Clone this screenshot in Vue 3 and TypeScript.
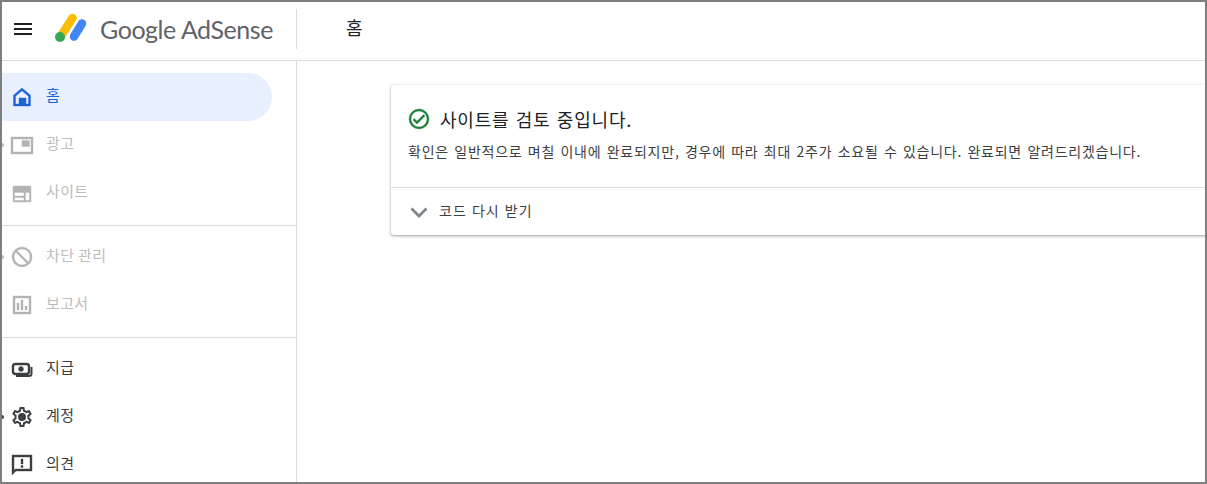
<script setup lang="ts">
interface Item { label: string; icon: string; dim?: boolean; active?: boolean; dot?: boolean }
const groups: Item[][] = [
  [
    { label: '홈', icon: 'home', active: true },
    { label: '광고', icon: 'ads', dim: true, dot: true },
    { label: '사이트', icon: 'sites', dim: true },
  ],
  [
    { label: '차단 관리', icon: 'block', dim: true, dot: true },
    { label: '보고서', icon: 'report', dim: true },
  ],
  [
    { label: '지급', icon: 'pay' },
    { label: '계정', icon: 'gear', dot: true },
    { label: '의견', icon: 'feedback' },
  ],
]
</script>

<template>
  <div class="frame">
    <header class="top">
      <div class="brand">
        <button class="menu" aria-label="메뉴">
          <svg width="24" height="24" viewBox="0 0 24 24"><path d="M3 18h18v-2H3v2zm0-5h18v-2H3v2zm0-7v2h18V6H3z" fill="#202124"/></svg>
        </button>
        <svg class="logo" width="34" height="30" viewBox="0 0 34 30">
          <path d="M7 23 L18.500 5" stroke="#fbbc04" stroke-width="8.600" stroke-linecap="round" fill="none"/>
          <path d="M20 23.500 L28 10.500" stroke="#4285f4" stroke-width="8.600" stroke-linecap="round" fill="none"/>
          <circle cx="6" cy="24" r="5" fill="#34a853"/>
        </svg>
        <span class="wordmark">Google AdSense</span>
      </div>
      <h1 class="title">홈</h1>
    </header>
    <div class="body">
      <nav class="side">
        <div v-for="(g, gi) in groups" :key="gi" class="group">
          <a v-for="it in g" :key="it.label" class="item" :class="{ dim: it.dim, active: it.active }">
            <i v-if="it.dot" class="dot"></i>
            <svg class="ico" width="24" height="24" viewBox="0 0 24 24" fill="currentColor" stroke="currentColor" stroke-width=".4">
              <path v-if="it.icon === 'home'" fill-rule="evenodd" d="M12 3 3.500 10.200V21h17V10.200L12 3zm0 2.700 6.500 5.500V19H16v-6H9v6H5.500v-7.800L12 5.700z"/>
              <path v-else-if="it.icon === 'ads'" fill-rule="evenodd" d="M1 4h22v17H1V4zm2 2v13h18V6H3zm9 1.500h7.500v6H12v-6z"/>
              <path v-else-if="it.icon === 'sites'" fill-rule="evenodd" d="M4 5h16a1 1 0 0 1 1 1v14a1 1 0 0 1-1 1H4a1 1 0 0 1-1-1V6a1 1 0 0 1 1-1zM4.500 11.500V15H14v-3.500H4.500zm0 5v3H14v-3H4.500zm11-5v8h4v-8h-4z"/>
              <path v-else-if="it.icon === 'block'" fill-rule="evenodd" d="M12 2a10 10 0 1 0 0 20 10 10 0 0 0 0-20zM20 12a8 8 0 0 0-12.900-6.300L18.300 16.900A7.900 7.900 0 0 0 20 12zM16.900 18.300 5.700 7.100A8 8 0 0 0 16.900 18.300z"/>
              <path v-else-if="it.icon === 'report'" fill-rule="evenodd" d="M3 3h18v18H3V3zm2 2v14h14V5H5zm2 5h2v7H7v-7zm4-3h2v10h-2V7zm4 6h2v4h-2v-4z"/>
              <g v-else-if="it.icon === 'pay'">
                <rect x="3" y="7" width="16" height="10" rx="2.500" fill="none" stroke="currentColor" stroke-width="2.400"/>
                <circle cx="11" cy="12" r="2.500"/>
                <path d="M21.500 10v6.500a2.500 2.500 0 0 1-2.500 2.500H6" fill="none" stroke="currentColor" stroke-width="2"/>
              </g>
              <path v-else-if="it.icon === 'gear'" stroke="none" fill-rule="evenodd" d="M19.430 12.980c.04-.32.070-.64.070-.98s-.030-.66-.070-.98l2.110-1.650a.5.5 0 0 0 .12-.64l-2-3.460a.5.5 0 0 0-.61-.22l-2.490 1a7.300 7.300 0 0 0-1.690-.98l-.38-2.650A.49.49 0 0 0 14 2h-4a.49.49 0 0 0-.49.420l-.38 2.650c-.61.250-1.170.590-1.690.980l-2.490-1a.57.57 0 0 0-.18-.030.5.5 0 0 0-.43.250l-2 3.460a.49.490 0 0 0 .12.640l2.110 1.650c-.04.320-.07.650-.07.980s.030.660.070.980l-2.110 1.650a.5.5 0 0 0-.12.640l2 3.460a.5.5 0 0 0 .61.220l2.490-1c.52.400 1.080.730 1.690.980l.38 2.650c.03.240.24.420.49.420h4c.25 0 .46-.180.49-.420l.38-2.650c.61-.250 1.170-.590 1.690-.980l2.490 1a.5.5 0 0 0 .61-.220l2-3.460a.5.5 0 0 0-.12-.640l-2.110-1.650zm-1.980-1.710c.04.310.05.520.05.730s-.020.430-.05.730l-.14 1.130.89.700 1.080.840-.7 1.210-1.270-.51-1.040-.42-.9.680c-.43.320-.84.560-1.250.730l-1.060.430-.16 1.130-.2 1.350h-1.400l-.19-1.350-.16-1.130-1.060-.43a5.700 5.700 0 0 1-1.230-.71l-.91-.7-1.060.43-1.270.51-.7-1.210 1.080-.84.890-.7-.14-1.130A8 8 0 0 1 6.500 12c0-.2.020-.43.050-.73l.14-1.130-.89-.7-1.080-.84.7-1.210 1.270.51 1.040.42.900-.68c.43-.32.840-.56 1.250-.73l1.060-.43.160-1.130.2-1.350h1.390l.19 1.350.16 1.130 1.060.43c.43.180.83.410 1.230.71l.91.700 1.060-.43 1.270-.51.7 1.210-1.070.85-.89.700.14 1.130zM12 8a4 4 0 1 0 0 8 4 4 0 0 0 0-8z"/>
              <path v-else fill-rule="evenodd" d="M2 2h20v16H6l-4 4V2zm2 2v13.200L5.200 16H20V4H4zm7 2h2v5h-2V6zm0 6.500h2v2h-2v-2z"/>
            </svg>
            <span class="label">{{ it.label }}</span>
          </a>
        </div>
      </nav>
      <main class="main">
        <section class="card">
          <div class="card-top">
            <div class="head">
              <svg width="24" height="24" viewBox="0 0 24 24" fill="#188038" stroke="#188038" stroke-width=".4"><path d="M12 2a10 10 0 1 0 0 20 10 10 0 0 0 0-20zm0 18a8 8 0 1 1 0-16 8 8 0 0 1 0 16zm4.590-12.420L10 14.170l-2.590-2.580L6 13l4 4 8-8-1.410-1.420z"/></svg>
              <h2>사이트를 검토 중입니다.</h2>
            </div>
            <p>확인은 일반적으로 며칠 이내에 완료되지만, 경우에 따라 최대 2주가 소요될 수 있습니다. 완료되면 알려드리겠습니다.</p>
          </div>
          <div class="card-foot">
            <svg width="24" height="24" viewBox="0 0 24 24"><path d="M4.500 8.500 12 16 19.500 8.500" fill="none" stroke="#80868b" stroke-width="2.800"/></svg>
            <span class="foot-label">코드 다시 받기</span>
          </div>
        </section>
      </main>
    </div>
  </div>
</template>

<style>
html, body { margin: 0; background: #fff; overflow: hidden; }
</style>

<style scoped>
.frame {
  box-sizing: border-box;
  width: 1207px;
  height: 484px;
  border: 2px solid #7f7f7f;
  background: #fff;
  display: flex;
  flex-direction: column;
  overflow: hidden;
  font-family: "Noto Sans CJK KR", "Noto Sans", sans-serif;
  color: #3c4043;
}
.top {
  flex: none;
  height: 59px;
  box-sizing: border-box;
  border-bottom: 1px solid #dadce0;
  display: flex;
  align-items: center;
}
.brand {
  box-sizing: border-box;
  width: 295px;
  height: 40px;
  margin-top: -4px;
  border-right: 1px solid #dadce0;
  display: flex;
  align-items: center;
}
.menu {
  border: 0;
  background: none;
  padding: 0;
  margin-left: 9px;
  width: 24px;
  height: 24px;
}
.logo { margin-left: 19px; margin-top: -2px; }
.wordmark {
  margin-left: 12px;
  font: 25px "Lato", "Roboto", sans-serif;
  letter-spacing: -.45px;
  color: #5f6368;
}
.title {
  margin: -9px 0 0 49px;
  font-size: 18px;
  font-weight: 400;
  color: #202124;
}
.body { flex: 1; display: flex; min-height: 0; }
.side {
  flex: none;
  box-sizing: border-box;
  width: 295px;
  border-right: 1px solid #dadce0;
  padding-top: 12px;
  overflow: hidden;
}
.group { padding-bottom: 8px; border-bottom: 1px solid #dadce0; margin-bottom: 7px; }
.group:last-child { border-bottom: 0; }
.item {
  position: relative;
  display: flex;
  align-items: center;
  box-sizing: border-box;
  width: 270px;
  height: 48px;
  padding-left: 8px;
  border-radius: 0 24px 24px 0;
  color: #3c4043;
  font-size: 15px;
  letter-spacing: .35px;
}
.ico { flex: none; }
.label { margin-left: 12px; margin-top: -5px; }
.item.active { background: #e8f0fe; color: #1a63d8; }
.item.dim { color: #bdbdbd; }
.item.dim .ico { color: #b3b3b3; }
.dot {
  position: absolute;
  left: 0;
  top: 22px;
  width: 2px;
  height: 4px;
  border-radius: 0 2px 2px 0;
  background: currentColor;
}
.main { flex: 1; min-width: 0; padding: 24px 0 0 94px; }
.card {
  width: 830px;
  height: 150px;
  box-sizing: border-box;
  background: #fff;
  border-radius: 3px 0 0 3px;
  box-shadow: 0 1px 2px rgba(60, 64, 67, .3), 0 1px 3px 1px rgba(60, 64, 67, .15);
}
.card-top { height: 103px; box-sizing: border-box; padding: 22px 0 0 16px; border-bottom: 1px solid #dadce0; }
.head { display: flex; align-items: center; gap: 9px; }
h2 { margin: 0; font-size: 18px; font-weight: 400; color: #202124; line-height: 24px; letter-spacing: .8px; word-spacing: 1.500px; }
p { margin: 10px 0 0 1px; font-size: 14px; line-height: 20px; color: #3c4043; white-space: nowrap; letter-spacing: .75px; word-spacing: 1.500px; }
.card-foot { height: 47px; display: flex; align-items: center; gap: 8px; padding-left: 16px; font-size: 14px; color: #3c4043; letter-spacing: 1px; word-spacing: 1px; }
.foot-label { margin-top: -4px; }
</style>
